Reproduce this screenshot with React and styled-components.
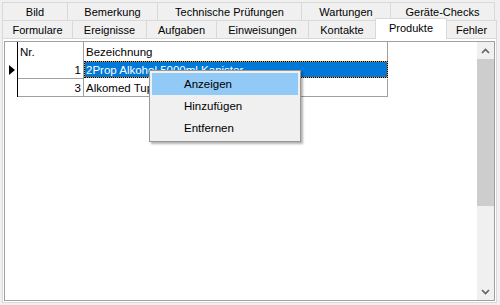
import React from 'react';
import styled, { createGlobalStyle, css } from 'styled-components';

const Global = createGlobalStyle`
  html, body {
    margin: 0;
    padding: 0;
    background: #f0f0f0;
  }
  body {
    font-family: "Liberation Sans", Arial, sans-serif;
  }
`;

const Window = styled.div`
  position: relative;
  width: 500px;
  height: 305px;
  box-sizing: border-box;
  padding: 2px 3px 2px 2px;
  display: flex;
  flex-direction: column;
  overflow: hidden;
  background: #f0f0f0;
`;

const TabRow = styled.div`
  display: flex;
  height: 18px;
  border-left: 1px solid #d9d9d9;
  box-sizing: border-box;
`;

const Tab = styled.div`
  box-sizing: border-box;
  width: ${props => props.w}px;
  height: 100%;
  border-top: 1px solid #d9d9d9;
  border-right: 1px solid #d9d9d9;
  display: flex;
  align-items: center;
  justify-content: center;
  font-size: 11px;
  color: #000;
  background: #f0f0f0;
  padding-top: 1px;

  ${props => (props.active && css`
    position: relative;
    z-index: 2;
    background: #fff;
    height: calc(100% + 3px);
    margin-top: -2px;
    margin-left: -1px;
    border-left: 1px solid #d9d9d9;
    padding-top: 0;
    padding-bottom: 3px;
  `)};
`;

const Panel = styled.div`
  flex: 1;
  box-sizing: border-box;
  border: 1px solid #d9d9d9;
  background: #fff;
  padding: 2px 1px 1px 1px;
  display: flex;
`;

const Grid = styled.div`
  flex: 1;
  box-sizing: border-box;
  border: 1px solid #a0a0a0;
  background: #fff;
  display: flex;
  font-size: 11.5px;
`;

const TableArea = styled.div`
  flex: 1;
`;

const Table = styled.div`
  display: grid;
  grid-template-columns: 13px 66px 304px;
  grid-template-rows: 19px;
  grid-auto-rows: 18px;
`;

const RowHead = styled.div`
  border-right: 1px solid #000;
  display: flex;
  align-items: center;
  justify-content: center;
  padding-left: 2px;
`;

const RowArrow = styled.span`
  width: 0;
  height: 0;
  border-top: 5px solid transparent;
  border-bottom: 5px solid transparent;
  border-left: 6px solid #000;
`;

const Cell = styled.div`
  box-sizing: border-box;
  display: flex;
  align-items: center;
  padding: 0 2px;
  white-space: nowrap;
  overflow: hidden;
  color: #000;
  border-right: 1px solid #a0a0a0;
  ${props => (props.body && css`border-bottom: 1px solid #a0a0a0;`)};
  ${props => (props.num && css`justify-content: flex-end;`)};

  ${props => (props.selected && css`
    color: #fff;
    border: 1px dotted #000;
    background: linear-gradient(#0078d7, #0078d7) padding-box, #f39c3c border-box;
    padding-left: 1px;
    margin-bottom: 1px;
  `)};
`;

const ScrollBar = styled.div`
  width: 17px;
  background: #f0f0f0;
  display: flex;
  flex-direction: column;
`;

const ScrollButton = styled.div`
  height: 17px;
  display: flex;
  align-items: center;
  justify-content: center;
`;

const Thumb = styled.div`
  height: 147px;
  background: #cdcdcd;
`;

const Track = styled.div`
  flex: 1;
`;

const Menu = styled.div`
  position: absolute;
  left: 149px;
  top: 70px;
  width: 152px;
  box-sizing: border-box;
  border: 1px solid #979797;
  background: #f0f0f0;
  padding: 2px;
  box-shadow: 2px 2px 2px rgba(0, 0, 0, 0.3);
  z-index: 5;
  font-size: 11.5px;
`;

const MenuItem = styled.div`
  height: 22px;
  display: flex;
  align-items: center;
  padding-left: 32px;
  color: #000;
  ${props => (props.hot && css`background: #91c9f7;`)};
`;

const row1 = [
  ['Bild', 65],
  ['Bemerkung', 90],
  ['Technische Prüfungen', 144],
  ['Wartungen', 89],
  ['Geräte-Checks', 104],
];

const row2 = [
  ['Formulare', 70],
  ['Ereignisse', 74],
  ['Aufgaben', 70],
  ['Einweisungen', 92],
  ['Kontakte', 67],
  ['Produkte', 72, true],
  ['Fehler', 50],
];

const rows = [
  { nr: 1, name: '2Prop Alkohol 5000ml Kanister', current: true },
  { nr: 3, name: 'Alkomed Tupfer' },
];

const Chevron = ({ down }) => (
  <svg width="9" height="6" viewBox="0 0 9 6">
    <polyline
      points={down ? '1,1 4.5,4.5 8,1' : '1,5 4.5,1.5 8,5'}
      fill="none"
      stroke="#606060"
      strokeWidth="1.6"
    />
  </svg>
);

const App = () => (
  <Window>
    <Global />
    <TabRow>
      {row1.map(([label, w]) => (
        <Tab key={label} w={w}>{label}</Tab>
      ))}
    </TabRow>
    <TabRow>
      {row2.map(([label, w, active]) => (
        <Tab key={label} w={w} active={active}>{label}</Tab>
      ))}
    </TabRow>
    <Panel>
      <Grid>
        <TableArea>
          <Table>
            <RowHead />
            <Cell>Nr.</Cell>
            <Cell>Bezeichnung</Cell>
            {rows.map(r => (
              <React.Fragment key={r.nr}>
                <RowHead>{r.current && <RowArrow />}</RowHead>
                <Cell body num>{r.nr}</Cell>
                <Cell body selected={r.current}>{r.name}</Cell>
              </React.Fragment>
            ))}
          </Table>
        </TableArea>
        <ScrollBar>
          <ScrollButton><Chevron /></ScrollButton>
          <Thumb />
          <Track />
          <ScrollButton><Chevron down /></ScrollButton>
        </ScrollBar>
      </Grid>
    </Panel>
    <Menu>
      <MenuItem hot>Anzeigen</MenuItem>
      <MenuItem>Hinzufügen</MenuItem>
      <MenuItem>Entfernen</MenuItem>
    </Menu>
  </Window>
);

export default App;
